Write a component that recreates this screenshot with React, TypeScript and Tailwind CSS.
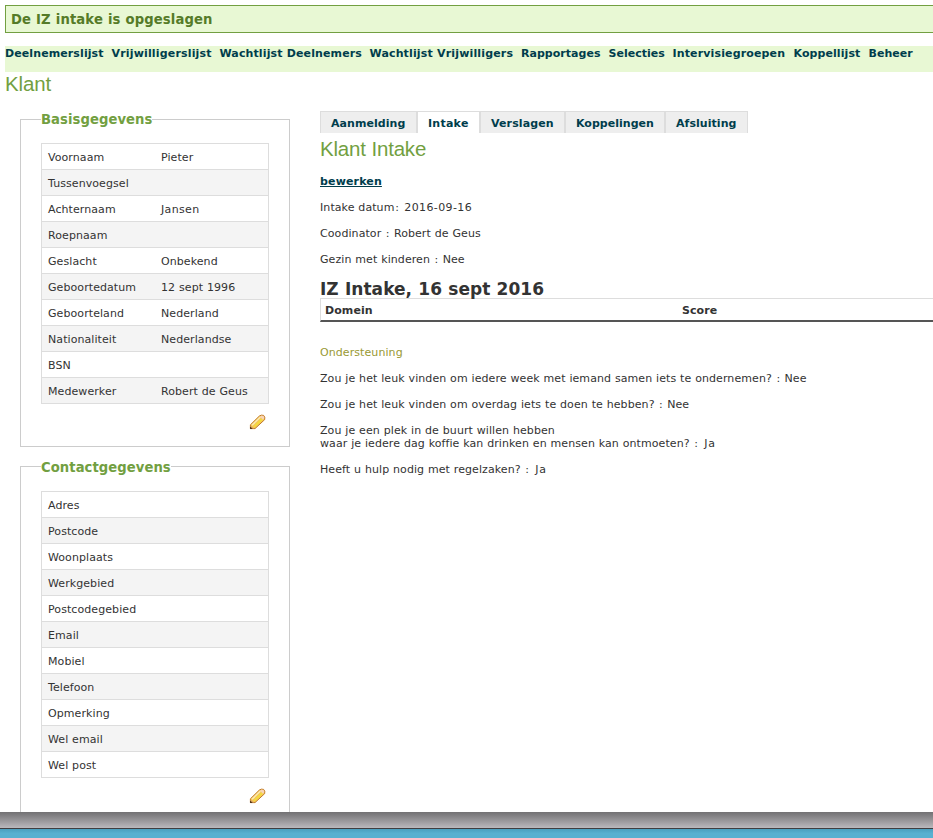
const navItems: { label: string; style: string }[] = [
  { label: 'Deelnemerslijst', style: 'w-[106.5px] tracking-[0.1px]' },
  { label: 'Vrijwilligerslijst', style: 'w-[108px] tracking-[0.17px]' },
  { label: 'Wachtlijst Deelnemers', style: 'w-[150px] tracking-[0.12px]' },
  { label: 'Wachtlijst Vrijwilligers', style: 'w-[151.5px] tracking-[0.15px]' },
  { label: 'Rapportages', style: 'w-[87.5px] tracking-[0.03px]' },
  { label: 'Selecties', style: 'w-16 tracking-[0.03px]' },
  { label: 'Intervisiegroepen', style: 'w-[121px] tracking-[0.14px]' },
  { label: 'Koppellijst', style: 'w-[75px] tracking-[0.08px]' },
  { label: 'Beheer', style: 'w-[50px] tracking-[0.03px]' },
];

const tabs: { label: string; style: string }[] = [
  { label: 'Aanmelding', style: 'w-[97px] tracking-[0.05px] border-l bg-[#eee]' },
  { label: 'Intake', style: 'w-[63px] tracking-[0.25px] border-l bg-white' },
  { label: 'Verslagen', style: 'w-[85px] tracking-[0.12px] border-l bg-[#eee]' },
  { label: 'Koppelingen', style: 'w-[100px] tracking-[0.02px] border-l bg-[#eee]' },
  { label: 'Afsluiting', style: 'w-[83px] tracking-[0.05px] border-l bg-[#eee]' },
];

const basics: [string, string][] = [
  ['Voornaam', 'Pieter'],
  ['Tussenvoegsel', ''],
  ['Achternaam', 'Jansen'],
  ['Roepnaam', ''],
  ['Geslacht', 'Onbekend'],
  ['Geboortedatum', '12 sept 1996'],
  ['Geboorteland', 'Nederland'],
  ['Nationaliteit', 'Nederlandse'],
  ['BSN', ''],
  ['Medewerker', 'Robert de Geus'],
];

const contact: [string, string][] = [
  ['Adres', ''],
  ['Postcode', ''],
  ['Woonplaats', ''],
  ['Werkgebied', ''],
  ['Postcodegebied', ''],
  ['Email', ''],
  ['Mobiel', ''],
  ['Telefoon', ''],
  ['Opmerking', ''],
  ['Wel email', ''],
  ['Wel post', ''],
];

function Pencil() {
  return (
    <svg width="17" height="16" viewBox="0 0 17 16" className="block">
      <path d="M1.4 14.6V10.8L10.4 2Q12.2 .6 14.6 1.4Q16.4 3 15.7 5.6L6 14.6Z" fill="#f5c65a" stroke="#c07a2a" />
      <path d="M3 11.2L11.4 3" stroke="#fbeab0" strokeWidth="1.6" />
      <path d="M5 13L13.6 4.8" stroke="#f5dd3a" strokeWidth="1.7" />
      <path d="M11 2.6L12.8 1.6L14.8 2.2L15.2 4.6L13.8 5.8Z" fill="#f8d3b8" />
      <path d="M1.5 11.4L5 14.5H1.5Z" fill="#dba564" />
      <path d="M1 12.4L3.8 15H1Z" fill="#57391a" />
    </svg>
  );
}

function DetailBox({ title, rows, boxStyle, legendStyle }: { title: string; rows: [string, string][]; boxStyle: string; legendStyle: string }) {
  return (
    <fieldset className={`w-[270px] border border-[#ccc] px-5 ${boxStyle}`}>
      <legend className={`h-4 text-[13.2px] font-bold tracking-[0.05px] text-[#729f41] ${legendStyle}`}>{title}</legend>
      <table className="w-[228px] border-collapse border border-[#ddd]">
        <tbody>
          {rows.map(([label, value]) => (
            <tr key={label} className="h-[26px] border-b border-[#ddd] even:bg-[#f4f4f4]">
              <td className="w-[113px] p-0 pt-0.5 pl-1.5 leading-[13px]">{label}</td>
              <td className={`p-0 pt-0.5 pl-[6.5px] leading-[13px] ${value.startsWith('J') ? 'tracking-[0.35px]' : ''}`}>{value}</td>
            </tr>
          ))}
        </tbody>
      </table>
      <div className="mt-2.5 ml-[208px]">
        <Pencil />
      </div>
    </fieldset>
  );
}

function Answer({ question, value }: { question: string; value: string }) {
  return (
    <>
      {question} <span className="pl-[0.7px] tracking-[0.6px]">:</span>{' '}
      <span className={value === 'Ja' ? 'pl-0.5 tracking-[0.6px]' : ''}>{value}</span>
    </>
  );
}

export default function App() {
  return (
    <div className="flex h-[838px] w-full flex-col overflow-hidden bg-white font-['DejaVu_Sans',sans-serif] text-[11px] leading-[13px] tracking-[0.08px] text-[#333] [word-spacing:0.25px]">
      <div className="h-[812px] overflow-hidden pt-[5px] pl-[5px]">
        <div className="h-7 border border-r-0 border-[#729f41] bg-[#e8f8d4] pl-[5px] text-[13.2px] leading-[27px] font-bold tracking-[0.12px] text-[#557b28]">
          De IZ intake is opgeslagen
        </div>
        <nav className="mt-[13px] flex h-[26px] bg-[#e8f8d4] pt-px font-bold text-[#003d4c]">
          {navItems.map((item) => (
            <a key={item.label} className={`shrink-0 whitespace-nowrap ${item.style}`}>{item.label}</a>
          ))}
        </nav>
        <h1 className="h-[39px] font-['Liberation_Sans',sans-serif] text-[20.5px] leading-6 tracking-[-0.15px] text-[#729f41]">Klant</h1>
        <div className="flex">
          <aside className="flex w-[285px] shrink-0 flex-col gap-[11px] pl-[15px]">
            <DetailBox title="Basisgegevens" rows={basics} boxStyle="h-[336px] pt-4" legendStyle="leading-[18px]" />
            <DetailBox title="Contactgegevens" rows={contact} boxStyle="h-[362px] pt-[17px]" legendStyle="leading-5" />
          </aside>
          <main className="ml-[30px] min-w-0 flex-1">
            <div className="flex h-[22px] font-bold text-[#003d4c]">
              {tabs.map((tab) => (
                <a key={tab.label} className={`border-t border-r border-[#ddd] pt-[5px] pl-2.5 ${tab.style}`}>
                  {tab.label}
                </a>
              ))}
            </div>
            <h2 className="mt-1 h-[38px] font-['Liberation_Sans',sans-serif] text-[20.5px] leading-6 tracking-[-0.2px] text-[#729f41]">Klant Intake</h2>
            <a className="block font-bold tracking-[0.15px] text-[#003d4c] underline">bewerken</a>
            <p className="mt-[13px]">
              Intake datum<span className="pl-[0.7px] tracking-[1.6px]">:</span>{' '}
              <span className="tracking-[0.38px]">2016-09-16</span>
            </p>
            <p className="mt-[13px]"><Answer question="Coodinator" value="Robert de Geus" /></p>
            <p className="mt-[13px]"><Answer question="Gezin met kinderen" value="Nee" /></p>
            <h3 className="mt-[13px] h-[19px] text-[17px] leading-5 font-bold tracking-[0.04px]">IZ Intake, 16 sept 2016</h3>
            <div className="flex h-6 border-t border-b-2 border-l border-t-[#ddd] border-b-[#555] border-l-[#ddd] pt-[5px] pl-1 font-bold">
              <span className="w-[357px]">Domein</span>
              <span>Score</span>
            </div>
            <p className="mt-6 text-[#993]">Ondersteuning</p>
            <p className="mt-[13px]">
              <Answer question="Zou je het leuk vinden om iedere week met iemand samen iets te ondernemen?" value="Nee" />
            </p>
            <p className="mt-[13px]">
              <Answer question="Zou je het leuk vinden om overdag iets te doen te hebben?" value="Nee" />
            </p>
            <p className="mt-[13px]">
              Zou je een plek in de buurt willen hebben
              <br />
              <Answer question="waar je iedere dag koffie kan drinken en mensen kan ontmoeten?" value="Ja" />
            </p>
            <p className="mt-[13px]"><Answer question="Heeft u hulp nodig met regelzaken?" value="Ja" /></p>
          </main>
        </div>
      </div>
      <footer className="flex h-[26px] flex-col">
        <div className="h-4 bg-linear-to-b from-[#727173] to-[#bbb9bd]" />
        <div className="h-px bg-[#403e41]" />
        <div className="flex-1 bg-linear-to-b from-[#4b9fbe] to-[#58b0d0] to-50%" />
      </footer>
    </div>
  );
}
